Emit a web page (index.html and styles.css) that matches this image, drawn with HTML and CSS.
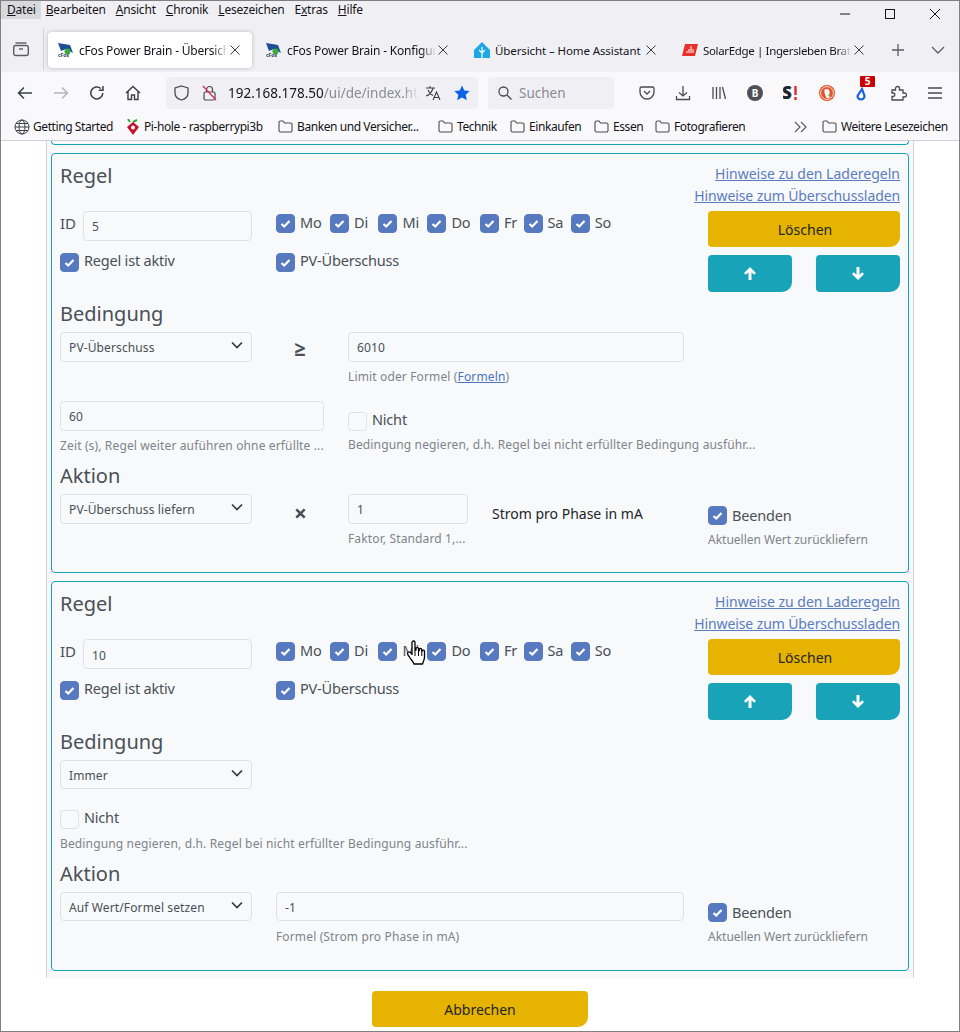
FILE: index.html
```
<!DOCTYPE html>
<html lang="de">
<head>
<meta charset="utf-8">
<title>cFos Power Brain</title>
<link rel="stylesheet" href="styles.css">
</head>
<body>
<div class="window">
  <header class="chrome">
    <div class="menubar">
      <nav class="menu">
        <span class="menu-item active"><u>D</u>atei</span>
        <span class="menu-item"><u>B</u>earbeiten</span>
        <span class="menu-item"><u>A</u>nsicht</span>
        <span class="menu-item"><u>C</u>hronik</span>
        <span class="menu-item"><u>L</u>esezeichen</span>
        <span class="menu-item">E<u>x</u>tras</span>
        <span class="menu-item"><u>H</u>ilfe</span>
      </nav>
      <div class="winctl">
        <svg class="ic" width="12" height="12" viewBox="0 0 12 12"><path d="M1 6h10" stroke="#15141a" fill="none"/></svg>
        <svg class="ic" width="12" height="12" viewBox="0 0 12 12"><rect x="1.5" y="1.5" width="9" height="9" stroke="#15141a" fill="none"/></svg>
        <svg class="ic" width="12" height="12" viewBox="0 0 12 12"><path d="M1 1l10 10M11 1L1 11" stroke="#15141a" fill="none"/></svg>
      </div>
    </div>
    <div class="tabbar">
      <div class="tabview">
        <svg width="18" height="18" viewBox="0 0 18 18" fill="none" stroke="#5b5b66" stroke-width="1.4"><path d="M3.5 3h11"/><rect x="1.7" y="5.5" width="14.6" height="10" rx="2"/><path d="M7 9h4"/></svg>
      </div>
      <div class="tabs">
        <div class="tab selected">
          <svg class="fav" width="16" height="16" viewBox="0 0 16 16"><path d="M0 1 L12 3 L15 11 L8 7 L3 9Z" fill="#1c4f96"/><circle cx="9.5" cy="9.5" r="3" fill="#3fa83a"/><text x="0" y="15" class="favtext">cFos</text></svg>
          <span class="tab-title tab-fade">cFos Power Brain - Übersicht</span>
          <svg class="tabx" width="10" height="10" viewBox="0 0 10 10"><path d="M.5.5l9 9M9.5.5l-9 9" stroke="#3a3a44" fill="none"/></svg>
        </div>
        <div class="tab">
          <svg class="fav" width="16" height="16" viewBox="0 0 16 16"><path d="M0 1 L12 3 L15 11 L8 7 L3 9Z" fill="#1c4f96"/><circle cx="9.5" cy="9.5" r="3" fill="#3fa83a"/><text x="0" y="15" class="favtext">cFos</text></svg>
          <span class="tab-title tab-fade">cFos Power Brain - Konfiguration</span>
          <svg class="tabx" width="10" height="10" viewBox="0 0 10 10"><path d="M.5.5l9 9M9.5.5l-9 9" stroke="#3a3a44" fill="none"/></svg>
        </div>
        <div class="tab">
          <svg class="fav" width="16" height="16" viewBox="0 0 16 16"><path d="M8 0 L16 8 V16 H0 V8Z" fill="#1ea7e6"/><path d="M8 5v11M5 8l3 3 3-3" stroke="#fff" fill="none" stroke-width="1.2"/></svg>
          <span class="tab-title tab-ha">Übersicht – Home Assistant</span>
          <svg class="tabx" width="10" height="10" viewBox="0 0 10 10"><path d="M.5.5l9 9M9.5.5l-9 9" stroke="#3a3a44" fill="none"/></svg>
        </div>
        <div class="tab">
          <svg class="fav" width="16" height="16" viewBox="0 0 16 16"><path d="M3 2 H16 L13 14 H0Z" fill="#e8302c"/><path d="M5 11V9M7 11V7M9 11V4M11 11V7" stroke="#fff" fill="none"/></svg>
          <span class="tab-title tab-tight tab-fade">SolarEdge | Ingersleben Bratg</span>
          <svg class="tabx" width="10" height="10" viewBox="0 0 10 10"><path d="M.5.5l9 9M9.5.5l-9 9" stroke="#3a3a44" fill="none"/></svg>
        </div>
      </div>
      <svg class="newtab" width="12" height="12" viewBox="0 0 12 12"><path d="M6 0v12M0 6h12" stroke="#5b5b66" stroke-width="1.3"/></svg>
      <svg class="alltabs" width="14" height="8" viewBox="0 0 14 8"><path d="M1 1l6 6 6-6" stroke="#5b5b66" stroke-width="1.3" fill="none"/></svg>
    </div>
    <div class="navbar">
      <div class="navbtns">
        <svg width="16" height="16" viewBox="0 0 16 16" fill="none" stroke="#3e3e48" stroke-width="1.5"><path d="M15 8H1.5M7 2.5L1.5 8 7 13.5"/></svg>
        <svg width="16" height="16" viewBox="0 0 16 16" fill="none" stroke="#b4b4ba" stroke-width="1.5"><path d="M1 8h13.5M9 2.5L14.5 8 9 13.5"/></svg>
        <svg width="16" height="16" viewBox="0 0 16 16" fill="none" stroke="#3e3e48" stroke-width="1.5"><path d="M13.8 8A6 6 0 1 1 11.8 3.5"/><path d="M14 1v4.200H9.800"/></svg>
        <svg width="16" height="16" viewBox="0 0 16 16" fill="none" stroke="#3e3e48" stroke-width="1.4"><path d="M1 8l7-6.500L15 8M3 6.500V14.500H6.500V10H9.500V14.500H13V6.500"/></svg>
      </div>
      <div class="urlbar">
        <svg width="15" height="16" viewBox="0 0 15 16" fill="none" stroke="#4a4a52" stroke-width="1.3"><path d="M7.5 1L14 3v5c0 3.500-3 6-6.500 7C4 14 1 11.500 1 8V3z"/></svg>
        <svg width="15" height="16" viewBox="0 0 15 16" fill="none" stroke="#4a4a52" stroke-width="1.2"><rect x="2" y="7" width="11" height="8" rx="1.5"/><path d="M4.5 7V4.500a3 3 0 0 1 6 0V7"/><path d="M1 1l13 14" stroke="#e22850"/></svg>
        <span class="url"><span class="url-host">192.168.178.50</span>/ui/de/index.html</span>
        <svg class="translate" width="17" height="16" viewBox="0 0 17 16" fill="none" stroke="#3e3e48" stroke-width="1.1"><path d="M1 3h9M5 1v2M8 3C7 7 4 10 1 11M3 5c1 3 3 4.500 5 5.500M8 15l3.500-8L15 15M9.300 12.500h4.500"/></svg>
        <svg class="star" width="16" height="16" viewBox="0 0 16 16"><path d="M8 .5l2.300 5 5.400.6-4 3.700 1.100 5.400L8 12.500l-4.800 2.700 1.100-5.400-4-3.700 5.400-.6z" fill="#0b64e4"/></svg>
      </div>
      <div class="searchbar">
        <svg width="14" height="14" viewBox="0 0 14 14" fill="none" stroke="#4a4a52" stroke-width="1.3"><circle cx="5.5" cy="5.5" r="4.500"/><path d="M9 9l4.500 4.500"/></svg>
        <span class="search-label">Suchen</span>
      </div>
      <div class="tools">
        <svg width="16" height="16" viewBox="0 0 16 16" fill="none" stroke="#4a4a52" stroke-width="1.3"><path d="M1 3.500A1.500 1.500 0 0 1 2.500 2h11A1.500 1.500 0 0 1 15 3.500V7a7 7 0 0 1-14 0z"/><path d="M5 6l3 3 3-3"/></svg>
        <svg width="16" height="16" viewBox="0 0 16 16" fill="none" stroke="#4a4a52" stroke-width="1.3"><path d="M8 1v10M4 7.500L8 11l4-3.500M1.500 11v3.500h13V11"/></svg>
        <svg width="16" height="16" viewBox="0 0 16 16" fill="none" stroke="#4a4a52" stroke-width="1.3"><path d="M2 2v12M5.500 2v12M9 2v12M11.500 2l3 12"/></svg>
        <svg width="16" height="16" viewBox="0 0 16 16"><circle cx="8" cy="8" r="8" fill="#4f4f58"/><text x="8" y="11.5" class="ext-b">B</text></svg>
        <svg width="16" height="16" viewBox="0 0 16 16"><text x="-1" y="14" class="ext-s">S</text><path d="M12.500 1v9M12.500 12v3" stroke="#e02b2b" stroke-width="2.400" fill="none"/></svg>
        <svg width="16" height="16" viewBox="0 0 16 16"><circle cx="8" cy="8" r="8" fill="#e5532a"/><circle cx="8" cy="8" r="6.400" fill="none" stroke="#fff" stroke-width=".8"/><path d="M5.500 4.500C7 3.500 10 3.500 10.500 6v7H7.500C6 10 5 7 5.500 4.500z" fill="#fff"/><path d="M8 10l3-.8v1.800z" fill="#5aa83c"/></svg>
        <div class="ext-drop">
          <svg width="16" height="16" viewBox="0 0 16 16" fill="none" stroke="#1463d8" stroke-width="2.2"><path d="M7 4L2.500 11a3.500 3.500 0 1 0 7 0z"/></svg>
          <span class="ext-badge">5</span>
        </div>
        <svg width="16" height="16" viewBox="0 0 16 16" fill="none" stroke="#4a4a52" stroke-width="1.3"><path d="M1 5h3.500V3.500a2 2 0 0 1 4 0V5H12v3h1.500a2 2 0 0 1 0 4H12v3H1v-3.500h1.500a1.800 1.800 0 0 0 0-3.500H1z"/></svg>
        <svg width="16" height="16" viewBox="0 0 16 16" fill="none" stroke="#4a4a52" stroke-width="1.3"><path d="M1 3h14M1 8h14M1 13h14"/></svg>
      </div>
    </div>
    <div class="bookmarks">
      <span class="bm bm-first"><svg width="16" height="16" viewBox="0 0 16 16" fill="none" stroke="#3e3e48"><circle cx="8" cy="8" r="7"/><ellipse cx="8" cy="8" rx="3" ry="7"/><path d="M1 8h14M2 4.500h12M2 11.500h12"/></svg>Getting Started</span>
      <span class="bm bm-pi"><svg width="14" height="16" viewBox="0 0 14 16"><path d="M4 3L2 0M7 3l4-2" stroke="#3aa53a" stroke-width="2" fill="none"/><path d="M7 3l6 5-6 8-6-8z" fill="#c8102e"/><circle cx="7" cy="8.500" r="2" fill="#fff"/></svg>Pi-hole - raspberrypi3b</span>
      <span class="bm bm-banken"><svg class="folder" width="15" height="13" viewBox="0 0 15 13"><path d="M1 2.500A1.500 1.500 0 0 1 2.500 1H5l1.500 2h6A1.500 1.500 0 0 1 14 4.500v6a1.500 1.500 0 0 1-1.500 1.500h-10A1.500 1.500 0 0 1 1 10.500z"/></svg>Banken und Versicher...</span>
      <span class="bm bm-tech"><svg class="folder" width="15" height="13" viewBox="0 0 15 13"><path d="M1 2.500A1.500 1.500 0 0 1 2.500 1H5l1.500 2h6A1.500 1.500 0 0 1 14 4.500v6a1.500 1.500 0 0 1-1.500 1.500h-10A1.500 1.500 0 0 1 1 10.500z"/></svg>Technik</span>
      <span class="bm bm-ein"><svg class="folder" width="15" height="13" viewBox="0 0 15 13"><path d="M1 2.500A1.500 1.500 0 0 1 2.500 1H5l1.500 2h6A1.500 1.500 0 0 1 14 4.500v6a1.500 1.500 0 0 1-1.500 1.500h-10A1.500 1.500 0 0 1 1 10.500z"/></svg>Einkaufen</span>
      <span class="bm bm-ess"><svg class="folder" width="15" height="13" viewBox="0 0 15 13"><path d="M1 2.500A1.500 1.500 0 0 1 2.500 1H5l1.500 2h6A1.500 1.500 0 0 1 14 4.500v6a1.500 1.500 0 0 1-1.500 1.500h-10A1.500 1.500 0 0 1 1 10.500z"/></svg>Essen</span>
      <span class="bm bm-foto"><svg class="folder" width="15" height="13" viewBox="0 0 15 13"><path d="M1 2.500A1.500 1.500 0 0 1 2.500 1H5l1.500 2h6A1.500 1.500 0 0 1 14 4.500v6a1.500 1.500 0 0 1-1.500 1.500h-10A1.500 1.500 0 0 1 1 10.500z"/></svg>Fotografieren</span>
      <svg class="bm-more" width="13" height="12" viewBox="0 0 13 12" fill="none" stroke="#5b5b66" stroke-width="1.2"><path d="M1 1l5 5-5 5M7 1l5 5-5 5"/></svg>
      <span class="bm bm-other"><svg class="folder" width="15" height="13" viewBox="0 0 15 13"><path d="M1 2.500A1.500 1.500 0 0 1 2.500 1H5l1.500 2h6A1.500 1.500 0 0 1 14 4.500v6a1.500 1.500 0 0 1-1.500 1.500h-10A1.500 1.500 0 0 1 1 10.500z"/></svg>Weitere Lesezeichen</span>
    </div>
  </header>

  <main class="viewport">
    <div class="panel">
      <div class="card card-sliver"></div>

      <section class="card">
        <div class="grid head">
          <div class="head-left">
            <h4 class="title title-first">Regel</h4>
            <div class="grid9 id-row">
              <div class="id-cell"><label class="id-label">ID</label><input class="field" value="5"></div>
              <div class="days">
                <label class="chk"><input type="checkbox" checked>Mo</label>
                <label class="chk"><input type="checkbox" checked>Di</label>
                <label class="chk"><input type="checkbox" checked>Mi</label>
                <label class="chk"><input type="checkbox" checked>Do</label>
                <label class="chk"><input type="checkbox" checked>Fr</label>
                <label class="chk"><input type="checkbox" checked>Sa</label>
                <label class="chk"><input type="checkbox" checked>So</label>
              </div>
            </div>
            <div class="grid9 active-row">
              <label class="chk cell-3"><input type="checkbox" checked>Regel ist aktiv</label>
              <label class="chk cell-6"><input type="checkbox" checked>PV-Überschuss</label>
            </div>
          </div>
          <div class="head-right">
            <a class="hint" href="#">Hinweise zu den Laderegeln</a>
            <a class="hint hint-long" href="#">Hinweise zum Überschussladen</a>
            <button class="btn btn-gold btn-del">Löschen</button>
            <div class="moves">
              <button class="btn btn-teal"><svg width="12" height="13" viewBox="0 0 12 13"><path d="M6 0l6 6-1.800 1.800L7.500 5.200V13h-3V5.200L1.800 7.800 0 6z" fill="#fff"/></svg></button>
              <button class="btn btn-teal"><svg width="12" height="13" viewBox="0 0 12 13"><path d="M6 13L0 7l1.800-1.800 2.700 2.600V0h3v7.800l2.700-2.600L12 7z" fill="#fff"/></svg></button>
            </div>
          </div>
        </div>

        <h4 class="title title-sec">Bedingung</h4>
        <div class="grid">
          <div class="span3"><select class="field sel"><option>PV-Überschuss</option></select></div>
          <div class="op">≥</div>
          <div class="span5"><input class="field" value="6010"><small class="help">Limit oder Formel (<a href="#">Formeln</a>)</small></div>
        </div>
        <div class="grid row-second">
          <div class="span4"><input class="field" value="60"><small class="help">Zeit (s), Regel weiter auführen ohne erfüllte ...</small></div>
          <div class="span8 nicht-cell"><label class="chk chk-low"><input type="checkbox">Nicht</label><small class="help help-nicht">Bedingung negieren, d.h. Regel bei nicht erfüllter Bedingung ausführ...</small></div>
        </div>
        <h4 class="title title-action">Aktion</h4>
        <div class="grid last-row">
          <div class="span3"><select class="field sel"><option>PV-Überschuss liefern</option></select></div>
          <div class="op op-x">
            <svg width="11" height="11" viewBox="0 0 11 11"><path d="M1.300 1.300l8.400 8.400M9.700 1.300L1.300 9.700" stroke="#495057" stroke-width="2.600" fill="none"/></svg>
          </div>
          <div class="span2"><input class="field" value="1"><small class="help">Faktor, Standard 1,...</small></div>
          <div class="span3 unit">Strom pro Phase in mA</div>
          <div class="span3 end-cell"><label class="chk"><input type="checkbox" checked>Beenden</label><small class="help help-end">Aktuellen Wert zurückliefern</small></div>
        </div>
      </section>

      <section class="card card-next">
        <div class="grid head">
          <div class="head-left">
            <h4 class="title title-first">Regel</h4>
            <div class="grid9 id-row">
              <div class="id-cell"><label class="id-label">ID</label><input class="field" value="10"></div>
              <div class="days">
                <label class="chk"><input type="checkbox" checked>Mo</label>
                <label class="chk"><input type="checkbox" checked>Di</label>
                <label class="chk"><input type="checkbox" checked>Mi</label>
                <label class="chk"><input type="checkbox" checked>Do</label>
                <label class="chk"><input type="checkbox" checked>Fr</label>
                <label class="chk"><input type="checkbox" checked>Sa</label>
                <label class="chk"><input type="checkbox" checked>So</label>
              </div>
            </div>
            <div class="grid9 active-row">
              <label class="chk cell-3"><input type="checkbox" checked>Regel ist aktiv</label>
              <label class="chk cell-6"><input type="checkbox" checked>PV-Überschuss</label>
            </div>
          </div>
          <div class="head-right">
            <a class="hint" href="#">Hinweise zu den Laderegeln</a>
            <a class="hint hint-long" href="#">Hinweise zum Überschussladen</a>
            <button class="btn btn-gold btn-del">Löschen</button>
            <div class="moves">
              <button class="btn btn-teal"><svg width="12" height="13" viewBox="0 0 12 13"><path d="M6 0l6 6-1.800 1.800L7.500 5.200V13h-3V5.200L1.800 7.800 0 6z" fill="#fff"/></svg></button>
              <button class="btn btn-teal"><svg width="12" height="13" viewBox="0 0 12 13"><path d="M6 13L0 7l1.800-1.800 2.700 2.600V0h3v7.800l2.700-2.600L12 7z" fill="#fff"/></svg></button>
            </div>
          </div>
        </div>

        <h4 class="title title-sec2">Bedingung</h4>
        <div class="grid">
          <div class="span3"><select class="field sel"><option>Immer</option></select></div>
        </div>
        <div class="grid row-nicht">
          <div class="span8"><label class="chk chk-low"><input type="checkbox">Nicht</label><small class="help help-nicht2">Bedingung negieren, d.h. Regel bei nicht erfüllter Bedingung ausführ...</small></div>
        </div>
        <h4 class="title title-action2">Aktion</h4>
        <div class="grid last-row2">
          <div class="span3"><select class="field sel"><option>Auf Wert/Formel setzen</option></select></div>
          <div class="span6"><input class="field" value="-1"><small class="help help-form">Formel (Strom pro Phase in mA)</small></div>
          <div class="span3 end-cell2"><label class="chk"><input type="checkbox" checked>Beenden</label><small class="help help-end">Aktuellen Wert zurückliefern</small></div>
        </div>
      </section>
    </div>
  </main>

  <footer class="footer">
    <button class="btn btn-gold btn-cancel">Abbrechen</button>
  </footer>

  <svg class="cursor" width="20" height="25" viewBox="0 0 20 25"><path d="M6 2.500c0-2 3-2 3 0V10l1 0V8.500c0-1.500 2.500-1.500 2.500 0V10.500l.8 0V9.500c0-1.500 2.400-1.500 2.400 0v1.500l.6 0c0-1.200 2.200-1.200 2.200.3V17c0 3-1.500 5-2 7H8c-.5-2-3-4.500-5-7.500C1.500 14.500 1 13 2.200 12.200 3.300 11.500 5 13 6 14.500z" fill="#fff" stroke="#000" stroke-width="1.300" stroke-linejoin="round"/><path d="M9 10v6M12.500 10v6M15.800 10.500v5.500" stroke="#000" stroke-width="1" fill="none"/></svg>
</div>
</body>
</html>
```
FILE: styles.css
```
* { box-sizing: border-box; }
html, body { margin: 0; padding: 0; height: 100%; overflow: hidden; background: #fff; }
body { font-family: "Noto Sans", "Open Sans", sans-serif; font-size: 14px; color: #495057; }
.window { position: relative; width: 960px; height: 1032px; border: 1px solid #7f7f7f; display: flex; flex-direction: column; overflow: hidden; }

/* browser chrome */
.chrome { flex: none; height: 140px; background: #f0f0f4; font-size: 12px; color: #15141a; border-bottom: 1px solid #cfcfd8; letter-spacing: -.2px; }
.menubar { height: 18px; display: flex; justify-content: space-between; }
.menu { display: flex; }
.menu-item { height: 18px; line-height: 17px; padding: 0 5px; }
.menu-item.active { background: #d9d9dc; padding: 0 5px 0 6px; }
.winctl { display: flex; gap: 33px; padding: 7px 18px 0 0; height: 18px; }
.ic { display: block; overflow: visible; }
.tabbar { height: 53px; display: flex; align-items: flex-start; }
.tabview { width: 43px; height: 42px; margin-top: 9px; border-right: 1px solid #d0d0d6; padding: 12px 0 0 11px; flex: none; }
.tabs { display: flex; gap: 4px; margin: 13px 0 0 4px; }
.tab { width: 204px; height: 36px; display: flex; align-items: center; padding: 0 12px 0 10px; border-radius: 4px; }
.tab.selected { background: #fff; box-shadow: 0 0 4px rgba(0,0,0,.22); }
.tab-title { flex: 1; min-width: 0; overflow: hidden; white-space: nowrap; margin-left: 5px; font-size: 12px; }
.tab-fade { -webkit-mask-image: linear-gradient(to right, #000 90%, transparent); mask-image: linear-gradient(to right, #000 90%, transparent); }
.tab-tight { font-size: 11.5px; letter-spacing: -.35px; }
.tab-ha { font-size: 11.5px; letter-spacing: -.1px; }
.fav { flex: none; display: block; }
.favtext { font-size: 5px; font-weight: 700; fill: #1d3c5c; letter-spacing: 0; }
.tabx { flex: none; margin-left: 2px; }
.newtab { margin: 25px 0 0 16px; flex: none; }
.alltabs { margin: 27px 0 0 27px; flex: none; }
.navbar { height: 41px; background: #f9f9fb; display: flex; align-items: center; padding-left: 16px; }
.navbtns { display: flex; gap: 20px; width: 149px; flex: none; }
.urlbar { width: 312px; height: 32px; background: #f0f0f4; border-radius: 4px; display: flex; align-items: center; padding: 0 8px; flex: none; }
.urlbar svg { flex: none; margin-right: 13px; }
.urlbar .translate { margin: 0 12px 0 6px; }
.urlbar .star { margin: 0; }
.url { flex: 1; min-width: 0; overflow: hidden; white-space: nowrap; color: #8a8a92; font-size: 13.5px; letter-spacing: 0; margin-left: -2px; -webkit-mask-image: linear-gradient(to right, #000 92%, transparent); mask-image: linear-gradient(to right, #000 92%, transparent); }
.url-host { color: #15141a; }
.searchbar { width: 126px; height: 32px; margin-left: 10px; background: #f0f0f4; border-radius: 4px; display: flex; align-items: center; gap: 7px; padding-left: 10px; flex: none; }
.search-label { color: #8a8a92; font-size: 13.5px; letter-spacing: 0; }
.tools { display: flex; gap: 20px; margin-left: 25px; align-items: center; }
.tools > svg { display: block; }
.ext-b { font-size: 10px; font-weight: 700; fill: #fff; text-anchor: middle; letter-spacing: 0; }
.ext-s { font-size: 17px; font-weight: 900; fill: #23232e; letter-spacing: 0; }
.ext-drop { position: relative; width: 16px; height: 16px; }
.ext-badge { position: absolute; left: 5px; top: -9px; width: 15px; height: 11px; background: #c00; color: #fff; font-size: 10px; font-weight: 700; line-height: 11px; text-align: center; border-radius: 1px; letter-spacing: 0; }
.bookmarks { height: 27px; background: #f9f9fb; display: flex; align-items: center; letter-spacing: -.42px; }
.bm { display: flex; align-items: center; gap: 4px; white-space: nowrap; flex: none; color: #15141a; }
.bm-first { width: 112px; margin-left: 13px; gap: 3px; }
.bm-pi { width: 152px; }
.bm-banken { width: 160px; }
.bm-tech { width: 72px; }
.bm-ein { width: 84px; }
.bm-ess { width: 61px; }
.bm-foto { width: 139px; }
.bm-other { margin-left: 15px; }
.bm-more { flex: none; }
.folder { fill: none; stroke: #4a4a52; stroke-width: 1.1; flex: none; }

/* page */
.viewport { flex: none; height: 837px; overflow: hidden; background: #fff; }
.panel { width: 868px; margin-left: 45px; padding: 0 4px; height: 100%; background: #f8f9fa; border-left: 1px solid #ced4da; border-right: 1px solid #ced4da; overflow: hidden; }
.card { background: #f8f9fa; border: 1px solid #17a2b8; border-radius: 4px; padding: 0 8px; margin-bottom: 8px; }
.card-sliver { height: 4px; border-top: 0; border-radius: 0 0 4px 4px; }
.card-next { margin-top: 8.45px; }
.grid { display: grid; grid-template-columns: repeat(12, 48px); column-gap: 24px; }
.head-left { grid-column: span 9; }
.head-right { grid-column: span 3; display: flex; flex-direction: column; align-items: flex-end; padding-top: 9px; }
.grid9 { display: grid; grid-template-columns: repeat(9, 48px); column-gap: 24px; }
.title { font-size: 20px; font-weight: 400; line-height: 28px; margin: 0; color: #495057; }
.title-first { margin: 7.5px 0 21.5px; }
.title-sec { margin: 7.5px 0 4.5px; }
.title-action { margin: 8px 0 4px; }
.title-sec2 { margin: 7.5px 0 4.05px; }
.title-action2 { margin: 8.5px 0 3.5px; }
.id-cell { grid-column: span 3; display: flex; align-items: flex-start; }
.id-label { width: 23px; flex: none; font-size: 15px; line-height: 24px; }
.days { grid-column: span 6; display: flex; gap: 8.5px; padding-top: 3px; }
.days .chk { line-height: 17px; }
.days .chk:nth-child(2) { margin-right: 2px; }
.days .chk:nth-child(4) { margin-right: 1px; }
.days .chk:nth-child(5) { margin-right: -2px; }
.days .chk:nth-child(6) { margin-right: -1px; }
.active-row { margin-top: 12px; }
.active-row .chk { line-height: 14px; }
.cell-3 { grid-column: span 3; }
.cell-6 { grid-column: span 6; }
.chk { display: flex; align-items: flex-start; font-size: 14.5px; line-height: 18px; gap: 5px; white-space: nowrap; letter-spacing: -.2px; }
.chk-low { line-height: 14px; }
.chk input { appearance: none; -webkit-appearance: none; width: 19px; height: 19px; margin: 0; flex: none; border: 1px solid #dee2e6; border-radius: 4px; background: #f8f9fa; }
.chk input:checked { border-color: #5679bf; background: #5679bf url("data:image/svg+xml,%3Csvg xmlns='http://www.w3.org/2000/svg' viewBox='0 0 19 19'%3E%3Cpath d='M5.500 10l2.700 2.500 5.300-5.500' stroke='%23fff' stroke-width='2.200' fill='none'/%3E%3C/svg%3E") center/19px no-repeat; }
.field { display: block; width: 100%; height: 29.5px; padding: 2px 8px 0; margin: 0; font-family: inherit; font-size: 12px; letter-spacing: .12px; color: #495057; background: #f8f9fa; border: 1px solid #dee2e6; border-radius: 4px; outline: none; }
.sel { appearance: none; -webkit-appearance: none; background: #f8f9fa url("data:image/svg+xml,%3Csvg xmlns='http://www.w3.org/2000/svg' viewBox='0 0 12 8'%3E%3Cpath d='M1 1.500l5 5 5-5' stroke='%23343a40' stroke-width='1.700' fill='none'/%3E%3C/svg%3E") right 8px top 8px/12px 8px no-repeat; }
.hint { font-size: 14px; line-height: 22px; color: #5a7cc0; white-space: nowrap; }
.hint-long { letter-spacing: -.1px; }
.btn { display: flex; align-items: center; justify-content: center; border: 0; padding: 0; font-family: inherit; font-size: 14px; color: #212529; cursor: pointer; border-radius: 4px 4px 10px 4px; }
.btn-gold { background: #e6b400; }
.btn-teal { background: #19a3b8; width: 84px; height: 37px; }
.btn-del { width: 192px; height: 36px; margin-top: 4px; padding-left: 2px; }
.moves { width: 192px; display: flex; justify-content: space-between; margin-top: 8px; }
.span2 { grid-column: span 2; }
.span3 { grid-column: span 3; }
.span4 { grid-column: span 4; }
.span5 { grid-column: span 5; }
.span6 { grid-column: span 6; }
.span8 { grid-column: span 8; }
.op { grid-column: span 1; text-align: center; font-size: 20px; line-height: 34px; font-weight: 700; color: #495057; }
.op-x { padding-top: 12px; line-height: 11px; }
.help { display: block; margin-top: 7.5px; font-size: 12px; line-height: 16px; letter-spacing: .14px; color: #7d848b; white-space: nowrap; }
.help a { color: #4a73c4; }
.row-second { margin-top: 16px; }
.nicht-cell { padding-top: 11px; }
.help-nicht { margin-top: 6px; }
.help-nicht2 { margin-top: 7px; }
.help-end { margin-top: 7px; letter-spacing: 0; }
.help-form { margin-top: 8px; }
.last-row { padding-bottom: 24px; }
.unit { font-size: 14px; line-height: 40px; color: #212529; }
.end-cell { padding-top: 12px; }
.row-nicht { margin-top: 20.5px; }
.end-cell2 { padding-top: 11px; }
.last-row2 { padding-bottom: 24.5px; }

/* footer */
.footer { flex: 1; background: #fff; display: flex; justify-content: center; padding-top: 13px; }
.btn-cancel { width: 216px; height: 36px; }

/* mouse pointer over the checkbox */
.cursor { position: absolute; left: 405px; top: 639px; }
```
